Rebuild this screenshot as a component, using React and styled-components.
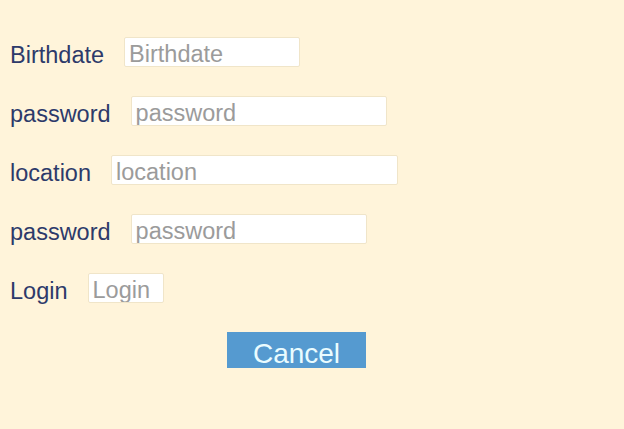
import React from "react";
import styled, { createGlobalStyle } from "styled-components";

const GlobalStyle = createGlobalStyle`
  html, body {
    margin: 0;
    padding: 0;
    background: #fff4da;
  }
  body {
    font-family: "Liberation Sans", Arial, sans-serif;
  }
`;

const fields = [
  { label: "Birthdate", width: 176 },
  { label: "password", width: 256 },
  { label: "location", width: 287 },
  { label: "password", width: 236 },
  { label: "Login", width: 76 },
];

function App() {
  return (
    <Page>
      <GlobalStyle />
      <Form onSubmit={(e) => e.preventDefault()}>
        {fields.map((f, i) => (
          <Row key={i}>
            <Label>{f.label}</Label>
            <Input placeholder={f.label} $width={f.width} />
          </Row>
        ))}
        <Actions>
          <CancelButton type="button">Cancel</CancelButton>
        </Actions>
      </Form>
    </Page>
  );
}

export default App;

const Page = styled.div`
  width: 624px;
  height: 429px;
  background: #fff4da;
  box-sizing: border-box;
  padding: 37px 0 0 10px;
`;

const Form = styled.form`
  display: flex;
  flex-direction: column;
  gap: 29px;
`;

const Row = styled.div`
  display: flex;
  align-items: center;
  gap: 20px;
  height: 30px;
`;

const Label = styled.label`
  color: #2d3a6a;
  font-size: 23.5px;
  line-height: 30px;
  padding-top: 5px;
`;

const Input = styled.input`
  width: ${(p) => p.$width}px;
  height: 30px;
  box-sizing: border-box;
  border: 1px solid #f0e5c9;
  border-radius: 2px;
  background: #ffffff;
  padding: 5px 4px 0;
  font-family: "Liberation Sans", Arial, sans-serif;
  font-size: 23.5px;
  color: #333;
  outline: none;

  &::placeholder {
    color: #9b9b9b;
    opacity: 1;
  }
`;

const Actions = styled.div`
  display: flex;
  padding-left: 217px;
`;

const CancelButton = styled.button`
  width: 139px;
  height: 36px;
  border: none;
  border-radius: 0;
  background: #559ad0;
  color: #eafcff;
  font-family: "Liberation Sans", Arial, sans-serif;
  font-size: 28px;
  line-height: 36px;
  padding: 4px 0 0;
  cursor: pointer;
`;
